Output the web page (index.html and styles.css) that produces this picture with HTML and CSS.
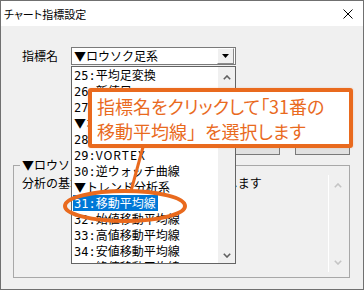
FILE: index.html
```html
<!DOCTYPE html>
<html lang="ja">
<head>
<meta charset="utf-8">
<title>チャート指標設定</title>
<link rel="stylesheet" href="styles.css">
</head>
<body>
<div class="window">
  <div class="titlebar">
    <span class="title">チャート指標設定</span>
    <svg class="close" width="10" height="10" viewBox="0 0 10 10"><path d="M0.5 0.5L9.5 9.5M9.5 0.5L0.5 9.5" stroke="#000" stroke-width="1" fill="none"/></svg>
  </div>
  <div class="content">
    <div class="form-row">
      <span class="label">指標名</span>
      <div class="combo">
        <span class="combo-text">▼ロウソク足系</span>
        <span class="combo-btn"><svg width="7" height="4" viewBox="0 0 7 4"><path d="M0 0H7L3.5 4Z" fill="#000"/></svg></span>
      </div>
    </div>
    <div class="buttons">
      <button class="btn btn-wide"></button>
      <button class="btn btn-narrow"></button>
    </div>
    <fieldset class="group">
      <legend class="legend">▼ロウソク足系</legend>
      <div class="edit">
        <div class="edit-text">分析の基本となるロウソク足系を表示します</div>
        <div class="edit-scroll">
          <svg width="8" height="5" viewBox="0 0 8 5"><path d="M0.8 4.2L4 1L7.2 4.2" stroke="#c4c4c4" stroke-width="1.6" fill="none"/></svg>
          <svg width="8" height="5" viewBox="0 0 8 5"><path d="M0.8 0.8L4 4L7.2 0.8" stroke="#c4c4c4" stroke-width="1.6" fill="none"/></svg>
        </div>
      </div>
    </fieldset>
  </div>

  <div class="dropdown">
    <ul class="items">
      <li><span class="no">25:</span>平均足変換</li>
      <li><span class="no">26:</span>新値足</li>
      <li><span class="no">27:</span>カギ足</li>
      <li>▼オシレーター系</li>
      <li><span class="no">28:</span>ポイント&amp;フィギュア</li>
      <li><span class="no">29:</span><span class="latin">VORTEX</span></li>
      <li><span class="no">30:</span>逆ウォッチ曲線</li>
      <li>▼トレンド分析系</li>
      <li><span class="sel"><span class="no">31:</span>移動平均線</span></li>
      <li><span class="no">32:</span>始値移動平均線</li>
      <li><span class="no">33:</span>高値移動平均線</li>
      <li><span class="no">34:</span>安値移動平均線</li>
      <li><span class="no">35:</span>終値移動平均線</li>
    </ul>
    <div class="list-scroll">
      <svg width="8" height="5" viewBox="0 0 8 5"><path d="M0.8 4.2L4 1L7.2 4.2" stroke="#606060" stroke-width="1.6" fill="none"/></svg>
      <svg width="8" height="5" viewBox="0 0 8 5"><path d="M0.8 0.8L4 4L7.2 0.8" stroke="#606060" stroke-width="1.6" fill="none"/></svg>
    </div>
  </div>

  <div class="callout">指標名をクリックして「31番の<br>移動平均線<span class="full">」</span>を選択します</div>

  <svg class="marks" width="362" height="288" viewBox="0 0 362 288">
    <ellipse cx="124" cy="205" rx="60" ry="15" fill="none" stroke="#e96a1e" stroke-width="4"/>
    <line x1="142" y1="146" x2="130" y2="190" stroke="#e96a1e" stroke-width="3"/>
  </svg>
</div>
</body>
</html>
```

FILE: styles.css
```css
html, body {
  margin: 0;
  padding: 0;
  background: #f0f0f0;
}

.window {
  position: relative;
  box-sizing: border-box;
  width: 364px;
  height: 290px;
  border: 1px solid #707070;
  background: #f0f0f0;
  font-family: "Noto Sans CJK JP", "Noto Sans", sans-serif;
  font-size: 12px;
  color: #000;
  overflow: hidden;
}

.titlebar {
  height: 25px;
  background: #fff;
  display: flex;
  align-items: center;
  padding: 0 10px 0 3px;
}

.title {
  font-size: 11px;
  font-feature-settings: "palt";
  flex: 1;
}

.close {
  display: block;
}

.content {
  padding: 21px 13px 0 12px;
}

.form-row {
  display: flex;
  align-items: center;
  padding-left: 9px;
  height: 18px;
}

.label {
  width: 36px;
  line-height: 16px;
}

.combo {
  margin-left: 13px;
  box-sizing: border-box;
  width: 165px;
  height: 18px;
  border: 1px solid #7a7a7a;
  background: #fff;
  display: flex;
  align-items: center;
}

.combo-text {
  padding-left: 2px;
  line-height: 16px;
  flex: 1;
}

.combo-btn {
  box-sizing: border-box;
  width: 17px;
  height: 16px;
  margin-right: 1px;
  background: #f0f0f0;
  border: 1px solid;
  border-color: #fff #8a8a8a #8a8a8a #fff;
  display: flex;
  align-items: center;
  justify-content: center;
}

.buttons {
  margin-top: 67px;
  display: flex;
  justify-content: flex-end;
  gap: 15px;
  height: 23px;
}

.btn {
  box-sizing: border-box;
  height: 23px;
  background: #e1e1e1;
  border: 1px solid #7a7a7a;
  padding: 0;
}

.btn-wide { width: 75px; }
.btn-narrow { width: 55px; }

.group {
  margin: 2px 0 0 0;
  padding: 2px 0 5px 6px;
  border: 1px solid #a8a8a8;
  min-width: 0;
}

.legend {
  padding: 0 2px;
  line-height: 16px;
}

.edit {
  display: flex;
  height: 97px;
  margin-right: 2px;
}

.edit-text {
  flex: 1;
  padding-left: 2px;
  line-height: 16px;
  white-space: nowrap;
  overflow: hidden;
}

.edit-scroll {
  width: 18px;
  border-left: 1px solid #fff;
  display: flex;
  flex-direction: column;
  justify-content: space-between;
  align-items: center;
  padding: 8px 0 7px;
}

.edit-scroll svg, .list-scroll svg { display: block; }

.dropdown {
  position: absolute;
  left: 70px;
  top: 65px;
  box-sizing: border-box;
  width: 165px;
  height: 198px;
  border: 1px solid #646464;
  background: #fff;
  display: flex;
  overflow: hidden;
}

.items {
  list-style: none;
  margin: 0;
  padding: 0;
  flex: 1;
}

.items li {
  height: 16px;
  line-height: 16px;
  padding-left: 2px;
  white-space: nowrap;
  overflow: hidden;
}

.no {
  font-family: "DejaVu Sans Mono", "Liberation Mono", monospace;
  font-size: 12px;
}

.latin {
  letter-spacing: 1px;
}

.sel {
  display: inline-block;
  background: #0078d7;
  color: #fff;
  line-height: 15px;
  margin-left: -1px;
  padding: 0 2px 0 1px;
}

.list-scroll {
  width: 17px;
  background: #f0f0f0;
  display: flex;
  flex-direction: column;
  justify-content: space-between;
  align-items: center;
  padding: 8px 0 5px;
}

.callout {
  position: absolute;
  left: 87px;
  top: 87px;
  box-sizing: border-box;
  width: 265px;
  height: 60px;
  border: 4px solid #e96a1e;
  border-radius: 3px;
  background: #fff;
  padding: 2px 0 0 5px;
  color: #e96a1e;
  font-size: 18px;
  line-height: 25px;
  font-feature-settings: "palt";
  white-space: nowrap;
  box-shadow: 0 0 2px rgba(233, 106, 30, 0.3);
}

.full {
  font-feature-settings: normal;
}

.marks {
  position: absolute;
  left: 0;
  top: 0;
  pointer-events: none;
}
```
